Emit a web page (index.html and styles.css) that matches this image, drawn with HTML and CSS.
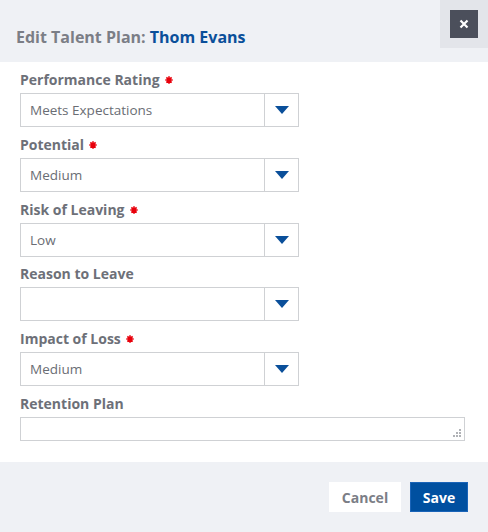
FILE: index.html
```html
<!DOCTYPE html>
<html>
<head>
<meta charset="utf-8">
<link rel="stylesheet" href="styles.css">
</head>
<body>
<div class="dialog">
  <div class="header">
    <h1 class="title">Edit Talent Plan: <span class="name">Thom Evans</span></h1>
    <div class="close-wrap"><button class="close" aria-label="Close"><svg width="10" height="10" viewBox="0 0 10 10"><path d="M1.5 1.5L8.5 8.5M8.5 1.5L1.5 8.5" stroke="#fff" stroke-width="2.2"/></svg></button></div>
  </div>
  <div class="body">
    <div class="field">
      <label class="label">Performance Rating <span class="req"><svg width="8" height="8" viewBox="0 0 8 8"><path d="M4 0.3V7.7M0.3 4H7.7M1.4 1.4L6.6 6.6M6.6 1.4L1.4 6.6" stroke="#e8000b" stroke-width="1.6"/></svg></span></label>
      <div class="select"><span class="value">Meets Expectations</span><span class="arrow"><svg width="14" height="8" viewBox="0 0 14 8"><path d="M0 0H14L7 8Z" fill="#0a4f9a"/></svg></span></div>
    </div>
    <div class="field">
      <label class="label">Potential <span class="req"><svg width="8" height="8" viewBox="0 0 8 8"><path d="M4 0.3V7.7M0.3 4H7.7M1.4 1.4L6.6 6.6M6.6 1.4L1.4 6.6" stroke="#e8000b" stroke-width="1.6"/></svg></span></label>
      <div class="select"><span class="value">Medium</span><span class="arrow"><svg width="14" height="8" viewBox="0 0 14 8"><path d="M0 0H14L7 8Z" fill="#0a4f9a"/></svg></span></div>
    </div>
    <div class="field">
      <label class="label">Risk of Leaving <span class="req"><svg width="8" height="8" viewBox="0 0 8 8"><path d="M4 0.3V7.7M0.3 4H7.7M1.4 1.4L6.6 6.6M6.6 1.4L1.4 6.6" stroke="#e8000b" stroke-width="1.6"/></svg></span></label>
      <div class="select"><span class="value">Low</span><span class="arrow"><svg width="14" height="8" viewBox="0 0 14 8"><path d="M0 0H14L7 8Z" fill="#0a4f9a"/></svg></span></div>
    </div>
    <div class="field">
      <label class="label">Reason to Leave</label>
      <div class="select"><span class="value"></span><span class="arrow"><svg width="14" height="8" viewBox="0 0 14 8"><path d="M0 0H14L7 8Z" fill="#0a4f9a"/></svg></span></div>
    </div>
    <div class="field">
      <label class="label">Impact of Loss <span class="req"><svg width="8" height="8" viewBox="0 0 8 8"><path d="M4 0.3V7.7M0.3 4H7.7M1.4 1.4L6.6 6.6M6.6 1.4L1.4 6.6" stroke="#e8000b" stroke-width="1.6"/></svg></span></label>
      <div class="select"><span class="value">Medium</span><span class="arrow"><svg width="14" height="8" viewBox="0 0 14 8"><path d="M0 0H14L7 8Z" fill="#0a4f9a"/></svg></span></div>
    </div>
    <div class="field">
      <label class="label">Retention Plan</label>
      <div class="textarea"><svg class="grip" width="8" height="8" viewBox="0 0 8 8"><g fill="#b0b2b6"><rect x="6" y="0" width="2" height="2"/><rect x="3" y="3" width="2" height="2"/><rect x="6" y="3" width="2" height="2"/><rect x="0" y="6" width="2" height="2"/><rect x="3" y="6" width="2" height="2"/><rect x="6" y="6" width="2" height="2"/></g></svg></div>
    </div>
  </div>
  <div class="footer">
    <button class="btn cancel">Cancel</button>
    <button class="btn save">Save</button>
  </div>
</div>
</body>
</html>
```
FILE: styles.css
```css
* { box-sizing: border-box; }
html, body { margin: 0; padding: 0; }
body {
  font-family: "Open Sans", "Noto Sans", sans-serif;
  background: #ffffff;
  width: 488px;
  height: 532px;
  overflow: hidden;
}
.dialog {
  display: flex;
  flex-direction: column;
  height: 532px;
}
.header {
  height: 62px;
  background: #eff1f5;
  display: flex;
  justify-content: space-between;
  align-items: flex-start;
}
.title {
  margin: 25px 0 0 16px;
  font-size: 16px;
  font-weight: 700;
  color: #7b7e86;
  line-height: 24px;
}
.name { color: #0a4f9a; }
.close-wrap {
  width: 48px;
  height: 48px;
  background: #e3e5ea;
  display: flex;
  align-items: center;
  justify-content: center;
}
.close {
  width: 28px;
  height: 28px;
  border: 0;
  padding: 0;
  background: #4b4f5b;
  display: flex;
  align-items: center;
  justify-content: center;
}
.body {
  flex: 1;
  padding: 8px 24px 0 20px;
  display: flex;
  flex-direction: column;
}
.field { display: flex; flex-direction: column; }
.label {
  font-size: 14px;
  font-weight: 700;
  color: #6d7078;
  line-height: 18px;
  height: 23px;
  padding-top: 1px;
  display: flex;
  align-items: flex-start;
  gap: 5px;
}
.req { display: inline-flex; margin-top: 5px; }
.select {
  width: 279px;
  height: 34px;
  border: 1px solid #cfd1d4;
  display: flex;
  margin-bottom: 7.75px;
}
.value {
  flex: 1;
  padding-left: 9px;
  font-size: 13.5px;
  color: #6a6d74;
  line-height: 32px;
}
.arrow {
  width: 34px;
  border-left: 1px solid #cfd1d4;
  display: flex;
  align-items: center;
  justify-content: center;
}
.textarea {
  width: 445px;
  height: 24px;
  border: 1px solid #cfd1d4;
  position: relative;
}
.grip { position: absolute; right: 3px; bottom: 3px; }
.footer {
  height: 70px;
  background: #eff1f5;
  display: flex;
  justify-content: flex-end;
  align-items: flex-start;
  padding: 20px 20px 0 0;
  gap: 9px;
}
.btn {
  height: 30px;
  font-family: "Open Sans", "Noto Sans", sans-serif;
  font-size: 14px;
  font-weight: 700;
  border: 1px solid transparent;
  padding: 0;
}
.cancel {
  width: 72px;
  background: #ffffff;
  color: #7b7e86;
}
.save {
  width: 58px;
  background: #0050a0;
  border-color: #1a64b8;
  color: #ffffff;
}
```
